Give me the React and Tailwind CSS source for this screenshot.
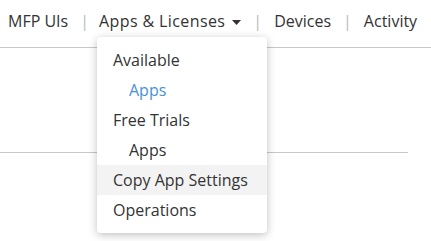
export default function App() {
  const items = [
    { label: "Available" },
    { label: "Apps", sub: true, active: true },
    { label: "Free Trials" },
    { label: "Apps", sub: true },
    { label: "Copy App Settings", hover: true },
    { label: "Operations" },
  ];

  return (
    <div className="w-[431px] h-[241px] bg-white overflow-hidden text-[#333] font-['Open_Sans',sans-serif]">
      <nav className="h-[48px] border-b border-[#c8c8c8] flex items-start pt-[9px] pl-2 text-[16px]">
        <span>MFP UIs</span>
        <span className="ml-[12px] mr-[10px] text-[#bbb]">|</span>
        <div className="relative">
          <span className="flex items-center gap-[7px]">
            <span className="tracking-[0.4px]">Apps &amp; Licenses</span>
            <svg width="9" height="5" viewBox="0 0 9 5" className="mt-[2px]">
              <path d="M0 0h9L4.5 5z" fill="#333" />
            </svg>
          </span>
          <div className="absolute left-[-2px] top-[28px] w-[170px] bg-white rounded-[4px] shadow-[0_2px_8px_rgba(0,0,0,0.25)] py-[8px] z-10">
            {items.map((it, i) => (
              <div
                key={i}
                className={
                  "h-[30px] flex items-center " +
                  (it.sub ? "pl-[32px] " : "pl-[16px] ") +
                  (it.active ? "text-[#4a90d9] " : "") +
                  (it.hover ? "bg-[#f3f3f3]" : "")
                }
              >
                {it.label}
              </div>
            ))}
          </div>
        </div>
        <span className="ml-[12px] mr-[12px] text-[#bbb]">|</span>
        <span>Devices</span>
        <span className="mx-[12px] text-[#bbb]">|</span>
        <span>Activity</span>
      </nav>
      <div className="mt-[104px] w-[408px] border-t border-[#c8c8c8]"></div>
    </div>
  );
}
